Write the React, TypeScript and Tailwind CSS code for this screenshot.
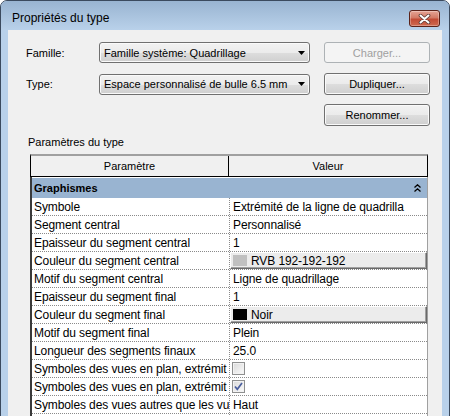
import React from 'react';

type Row = { p: string; v?: string; color?: string; check?: boolean };

const rows: Row[] = [
  { p: 'Symbole', v: 'Extrémité de la ligne de quadrilla' },
  { p: 'Segment central', v: 'Personnalisé' },
  { p: 'Epaisseur du segment central', v: '1' },
  { p: 'Couleur du segment central', color: '#c0c0c0', v: 'RVB 192-192-192' },
  { p: 'Motif du segment central', v: 'Ligne de quadrillage' },
  { p: 'Epaisseur du segment final', v: '1' },
  { p: 'Couleur du segment final', color: '#000000', v: 'Noir' },
  { p: 'Motif du segment final', v: 'Plein' },
  { p: 'Longueur des segments finaux', v: '25.0' },
  { p: 'Symboles des vues en plan, extrémit', check: false },
  { p: 'Symboles des vues en plan, extrémit', check: true },
  { p: 'Symboles des vues autres que les vu', v: 'Haut' },
  { p: '', v: '' },
];

function Arrow() {
  return (
    <svg width="7" height="4" viewBox="0 0 7 4" className="shrink-0">
      <path d="M0 0H7L3.5 4Z" fill="#000" />
    </svg>
  );
}

function Combo({ text }: { text: string }) {
  return (
    <div className="w-[211px] h-[21px] flex items-center justify-between pl-[4px] pr-[4px] border border-[#707070] rounded-[3px] bg-[linear-gradient(to_bottom,#f2f2f2_0%,#ebebeb_50%,#dddddd_51%,#cfcfcf_100%)] shadow-[inset_0_0_0_1px_#fafafa]">
      <span className="whitespace-nowrap text-black">{text}</span>
      <Arrow />
    </div>
  );
}

function Button({ text, disabled, h }: { text: string; disabled?: boolean; h: string }) {
  if (disabled) {
    return (
      <div className={`w-[106px] ${h} flex items-center justify-center border border-[#adb2b5] rounded-[3px] bg-[#f4f4f4] text-[#a0a0a0]`}>
        {text}
      </div>
    );
  }
  return (
    <div className={`w-[106px] ${h} flex items-center justify-center border border-[#707070] rounded-[3px] bg-[linear-gradient(to_bottom,#f2f2f2_0%,#ebebeb_50%,#dddddd_51%,#cfcfcf_100%)] shadow-[inset_0_0_0_1px_#fafafa] text-black`}>
      {text}
    </div>
  );
}

function CheckBox({ checked }: { checked: boolean }) {
  return (
    <div className="w-[13px] h-[13px] border border-[#8e8f8f] bg-[linear-gradient(135deg,#dadada,#fbfbfb)] shadow-[inset_0_0_0_1px_#f2f2f2] flex items-center justify-center">
      {checked && (
        <svg width="11" height="11" viewBox="0 0 11 11">
          <path d="M2 5.5L4.3 8.3L9 2" stroke="#4b5f9e" strokeWidth="1.7" fill="none" />
        </svg>
      )}
    </div>
  );
}

function CloseButton() {
  return (
    <div className="w-[31px] h-[17px] rounded-[3px] border border-[#5b2219] bg-[linear-gradient(to_bottom,#e5a495_0%,#d37a66_45%,#c24b35_55%,#cf6a50_100%)] shadow-[inset_0_0_0_1px_rgba(255,255,255,0.3)] flex items-center justify-center">
      <svg width="13" height="10" viewBox="0 0 13 10">
        <path d="M2.5 1.5L10.5 8.5M10.5 1.5L2.5 8.5" stroke="#5a3a36" strokeWidth="3.6" strokeLinecap="round" />
        <path d="M2.5 1.5L10.5 8.5M10.5 1.5L2.5 8.5" stroke="#ffffff" strokeWidth="2" strokeLinecap="round" />
      </svg>
    </div>
  );
}

function Chevrons() {
  return (
    <svg width="7" height="8" viewBox="0 0 7 8">
      <path d="M0.5 3.5L3.5 0.8L6.5 3.5M0.5 7.5L3.5 4.8L6.5 7.5" stroke="#000" strokeWidth="1.3" fill="none" />
    </svg>
  );
}

export default function App() {
  return (
    <div className="w-[450px] h-[416px] overflow-hidden bg-white [font-family:'Liberation_Sans',Arial,sans-serif] text-[11px] leading-[14px]">
      <div className="w-[450px] h-[440px] rounded-t-[7px] border border-[#3b4a5e] bg-[#b9d1ea] flex flex-col">
        {/* Title bar */}
        <div className="h-[29px] shrink-0 rounded-t-[6px] bg-[linear-gradient(to_bottom,#99b4d1,#b9d1ea)] flex items-start justify-between pl-[11px] pr-[9px] pt-[9px]">
          <span className="text-[12px] leading-[17px] text-black">Propriétés du type</span>
          <CloseButton />
        </div>
        {/* Content */}
        <div className="flex-1 mx-[7px] bg-[#f0f0f0] flex flex-col pt-[12px]">
          <div className="flex items-center pl-[18px]">
            <span className="w-[73px]">Famille:</span>
            <Combo text="Famille système: Quadrillage" />
            <div className="ml-[14px]">
              <Button text="Charger..." disabled h="h-[21px]" />
            </div>
          </div>
          <div className="flex items-center pl-[18px] mt-[10px]">
            <span className="w-[73px]">Type:</span>
            <div className="h-[22px] flex items-center">
              <Combo text="Espace personnalisé de bulle 6.5 mm" />
            </div>
            <div className="ml-[14px]">
              <Button text="Dupliquer..." h="h-[22px]" />
            </div>
          </div>
          <div className="flex pl-[316px] mt-[9px]">
            <Button text="Renommer..." h="h-[22px]" />
          </div>
          <div className="pl-[20px] mt-[9px]">Paramètres du type</div>

          {/* Table */}
          <div className="ml-[22px] mt-[5px] w-[398px] flex flex-col">
            <div className="h-[23px] flex border-t-2 border-t-[#a0a0a0] border-l border-r border-b border-l-black border-r-black border-b-black bg-[#f0f0f0]">
              <div className="w-[198px] border-r border-black flex items-center justify-center">Paramètre</div>
              <div className="flex-1 flex items-center justify-center">Valeur</div>
            </div>
            <div className="bg-white border-l-2 border-l-[#3a3a3a] border-r border-r-[#a0a0a0] pt-px flex flex-col">
              <div className="h-[20px] bg-[#99b4d1] flex items-center justify-between pl-[2px] pr-[6px]">
                <span className="font-bold">Graphismes</span>
                <Chevrons />
              </div>
              {rows.map((r, i) => (
                <div key={i} className="h-[18px] flex border-b border-dotted border-b-[#8a8a8a] text-[12px] tracking-[-0.1px]">
                  <div className="w-[198px] shrink-0 border-r border-dotted border-r-[#8a8a8a] pl-[2px] flex items-center overflow-hidden whitespace-nowrap">
                    {r.p}
                  </div>
                  <div className="flex-1 min-w-0 flex items-center overflow-hidden whitespace-nowrap">
                    {r.color ? (
                      <div className="w-full h-[17px] flex items-center bg-[#ececec] border-t border-l border-t-white border-l-white border-b border-r border-b-[#6a6a6a] border-r-[#6a6a6a] shadow-[inset_-1px_-1px_0_#a0a0a0] pl-[2px]">
                        <span className="w-[14px] h-[11px] shrink-0" style={{ backgroundColor: r.color }} />
                        <span className="ml-[4px]">{r.v}</span>
                      </div>
                    ) : r.check !== undefined ? (
                      <div className="pl-[2px]">
                        <CheckBox checked={r.check} />
                      </div>
                    ) : (
                      <span className="pl-[3px]">{r.v}</span>
                    )}
                  </div>
                </div>
              ))}
            </div>
          </div>
        </div>
      </div>
    </div>
  );
}
